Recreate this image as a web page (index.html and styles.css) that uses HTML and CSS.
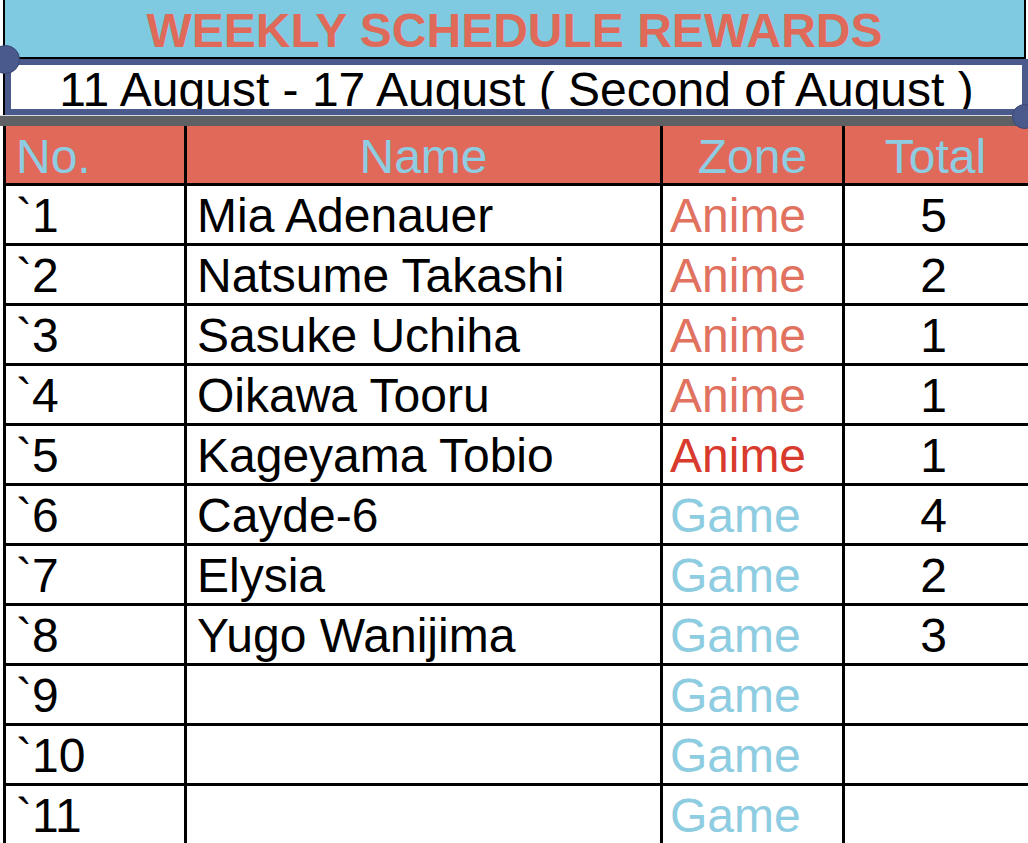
FILE: index.html
```html
<!DOCTYPE html>
<html lang="en">
<head>
<meta charset="utf-8">
<title>Weekly Schedule Rewards</title>
<link rel="stylesheet" href="styles.css">
</head>
<body>
<div class="page">
  <div class="top">
    <div class="banner"><h1 class="title">WEEKLY SCHEDULE REWARDS</h1></div>
    <div class="date"><p class="date-text">11 August - 17 August ( Second of August )</p></div>
  </div>
  <div class="gap"></div>
  <div class="sheet">
    <div class="row head">
      <div class="cell no">No.</div>
      <div class="cell name center">Name</div>
      <div class="cell zone center">Zone</div>
      <div class="cell total">Total</div>
    </div>
    <div class="row">
      <div class="cell no">`1</div>
      <div class="cell name">Mia Adenauer</div>
      <div class="cell zone anime">Anime</div>
      <div class="cell total">5</div>
    </div>
    <div class="row">
      <div class="cell no">`2</div>
      <div class="cell name">Natsume Takashi</div>
      <div class="cell zone anime">Anime</div>
      <div class="cell total">2</div>
    </div>
    <div class="row">
      <div class="cell no">`3</div>
      <div class="cell name">Sasuke Uchiha</div>
      <div class="cell zone anime">Anime</div>
      <div class="cell total">1</div>
    </div>
    <div class="row">
      <div class="cell no">`4</div>
      <div class="cell name">Oikawa Tooru</div>
      <div class="cell zone anime">Anime</div>
      <div class="cell total">1</div>
    </div>
    <div class="row">
      <div class="cell no">`5</div>
      <div class="cell name">Kageyama Tobio</div>
      <div class="cell zone anime-red">Anime</div>
      <div class="cell total">1</div>
    </div>
    <div class="row">
      <div class="cell no">`6</div>
      <div class="cell name">Cayde-6</div>
      <div class="cell zone game">Game</div>
      <div class="cell total">4</div>
    </div>
    <div class="row">
      <div class="cell no">`7</div>
      <div class="cell name">Elysia</div>
      <div class="cell zone game">Game</div>
      <div class="cell total">2</div>
    </div>
    <div class="row">
      <div class="cell no">`8</div>
      <div class="cell name">Yugo Wanijima</div>
      <div class="cell zone game">Game</div>
      <div class="cell total">3</div>
    </div>
    <div class="row">
      <div class="cell no">`9</div>
      <div class="cell name"></div>
      <div class="cell zone game">Game</div>
      <div class="cell total"></div>
    </div>
    <div class="row">
      <div class="cell no">`10</div>
      <div class="cell name"></div>
      <div class="cell zone game">Game</div>
      <div class="cell total"></div>
    </div>
    <div class="row">
      <div class="cell no">`11</div>
      <div class="cell name"></div>
      <div class="cell zone game">Game</div>
      <div class="cell total"></div>
    </div>
  </div>
  <span class="pin pin-left"></span>
  <span class="pin pin-right"></span>
</div>
</body>
</html>
```

FILE: styles.css
```css
* {
  box-sizing: border-box;
}

html, body {
  margin: 0;
  padding: 0;
  background: #ffffff;
}

body {
  font-family: "Liberation Sans", Arial, sans-serif;
  color: #000000;
}

.page {
  position: relative;
  width: 1028px;
  height: 843px;
  overflow: hidden;
  background: #ffffff;
}

.top {
  margin-left: 3px;
  border-left: 2px solid #000000;
}

.banner {
  height: 59px;
  margin-right: 2px;
  background: #7fcae0;
  border-right: 2px solid #000000;
  border-bottom: 2px solid #000000;
  text-align: center;
}

.title {
  margin: 0;
  font-size: 48px;
  font-weight: bold;
  line-height: 61px;
  height: 57px;
  overflow: hidden;
  color: #e06a5a;
}

.date {
  height: 56px;
  border: 6px solid #4b5a8c;
  background: #ffffff;
  overflow: hidden;
  text-align: center;
}

.date-text {
  margin: 0;
  padding-top: 3px;
  font-size: 48px;
  line-height: 44px;
  white-space: nowrap;
}

.gap {
  height: 11px;
  background: #5f6064;
  border-top: 1px solid #d8d9dc;
}

.sheet {
  margin-left: 3px;
  border-left: 3px solid #000000;
}

.row {
  display: grid;
  grid-template-columns: 181px 476px 182px 1fr;
  height: 60px;
}

.cell {
  height: 60px;
  padding-top: 3px;
  border-bottom: 3px solid #000000;
  border-right: 3px solid #000000;
  font-size: 48px;
  line-height: 54px;
  white-space: nowrap;
  overflow: hidden;
}

.cell.total {
  border-right: none;
  text-align: center;
  padding-right: 6px;
}

.cell.no {
  padding-left: 10px;
}

.cell.name {
  padding-left: 10px;
}

.cell.zone {
  padding-left: 7px;
}

.head .cell {
  background: #e0695a;
  color: #8ecde1;
  padding-top: 2px;
  line-height: 57px;
}

.head .cell.center {
  text-align: center;
  padding-left: 0;
}

.head .cell.total {
  padding-right: 2px;
}

.anime {
  color: #e0725f;
}

.anime-red {
  color: #d83a2d;
}

.game {
  color: #8ecde1;
}

.pin {
  position: absolute;
  border-radius: 50%;
  background: #4b5a8c;
  border: 1px solid #3a4672;
}

.pin-left {
  left: -9px;
  top: 45px;
  width: 29px;
  height: 29px;
}

.pin-right {
  left: 1012px;
  top: 104px;
  width: 25px;
  height: 25px;
}
```
